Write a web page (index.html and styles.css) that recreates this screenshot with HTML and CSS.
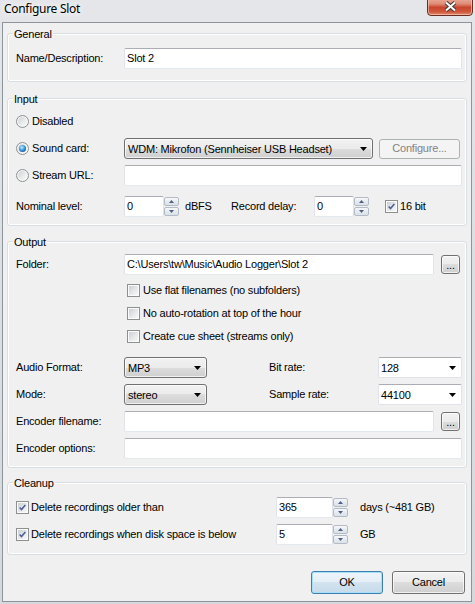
FILE: index.html
```html
<!DOCTYPE html>
<html lang="en">
<head>
<meta charset="utf-8">
<title>Configure Slot</title>
<link rel="stylesheet" href="styles.css">
</head>
<body>
<div class="window">
  <div class="titlebar">
    <span class="title">Configure Slot</span>
    <div class="close-btn">
      <svg width="13" height="11" viewBox="0 0 13 11"><path d="M2 1.5 L11 9.5 M11 1.5 L2 9.5" stroke="#3a3a3a" stroke-width="4"/><path d="M2 1.5 L11 9.5 M11 1.5 L2 9.5" stroke="#fff" stroke-width="2"/></svg>
    </div>
  </div>
  <div class="client">
    <div class="group g-general">
      <span class="legend">General</span>
      <div class="row">
        <span class="lbl">Name/Description:</span>
        <div class="edit grow">Slot 2</div>
      </div>
    </div>

    <div class="group g-input">
      <span class="legend">Input</span>
      <div class="row">
        <span class="opt"><span class="radio"></span>Disabled</span>
      </div>
      <div class="row mt6">
        <span class="lbl opt"><span class="radio on"><span class="dot"></span></span>Sound card:</span>
        <div class="combo face w-sound"><span class="ctext">WDM: Mikrofon (Sennheiser USB Headset)</span><svg class="arrow" width="7" height="4" viewBox="0 0 7 4"><path d="M0 0H7L3.5 4Z"/></svg></div>
        <div class="button disabled w-config">Configure...</div>
      </div>
      <div class="row mt6">
        <span class="lbl opt"><span class="radio"></span>Stream URL:</span>
        <div class="edit grow"></div>
      </div>
      <div class="row mt10">
        <span class="lbl">Nominal level:</span>
        <div class="edit w-num">0</div>
        <div class="spin"><div class="sb"><svg width="5" height="3" viewBox="0 0 5 3"><path d="M0 3H5L2.5 0Z"/></svg></div><div class="sb"><svg width="5" height="3" viewBox="0 0 5 3"><path d="M0 0H5L2.5 3Z"/></svg></div></div>
        <span class="unit w-dbfs">dBFS</span>
        <span class="w-delay">Record delay:</span>
        <div class="edit w-num">0</div>
        <div class="spin"><div class="sb"><svg width="5" height="3" viewBox="0 0 5 3"><path d="M0 3H5L2.5 0Z"/></svg></div><div class="sb"><svg width="5" height="3" viewBox="0 0 5 3"><path d="M0 0H5L2.5 3Z"/></svg></div></div>
        <span class="opt ml-bit"><span class="cb on"><svg width="11" height="11" viewBox="0 0 11 11"><path d="M2 5.5 L4.3 8 L9 2.5" fill="none" stroke="#4a5f97" stroke-width="1.9"/></svg></span>16 bit</span>
      </div>
    </div>

    <div class="group g-output">
      <span class="legend">Output</span>
      <div class="row">
        <span class="lbl">Folder:</span>
        <div class="edit w-path">C:\Users\tw\Music\Audio Logger\Slot 2</div>
        <div class="button face dots">...</div>
      </div>
      <div class="row crow mt7">
        <span class="opt ml-check"><span class="cb"></span>Use flat filenames (no subfolders)</span>
      </div>
      <div class="row crow mt6">
        <span class="opt ml-check"><span class="cb"></span>No auto-rotation at top of the hour</span>
      </div>
      <div class="row crow mt6">
        <span class="opt ml-check"><span class="cb"></span>Create cue sheet (streams only)</span>
      </div>
      <div class="row mt12">
        <span class="lbl">Audio Format:</span>
        <div class="combo face w-small"><span class="ctext">MP3</span><svg class="arrow" width="7" height="4" viewBox="0 0 7 4"><path d="M0 0H7L3.5 4Z"/></svg></div>
        <span class="lbl2">Bit rate:</span>
        <div class="combo white w-rate"><span class="ctext">128</span><svg class="arrow" width="7" height="4" viewBox="0 0 7 4"><path d="M0 0H7L3.5 4Z"/></svg></div>
      </div>
      <div class="row mt6">
        <span class="lbl">Mode:</span>
        <div class="combo face w-small"><span class="ctext">stereo</span><svg class="arrow" width="7" height="4" viewBox="0 0 7 4"><path d="M0 0H7L3.5 4Z"/></svg></div>
        <span class="lbl2">Sample rate:</span>
        <div class="combo white w-rate"><span class="ctext">44100</span><svg class="arrow" width="7" height="4" viewBox="0 0 7 4"><path d="M0 0H7L3.5 4Z"/></svg></div>
      </div>
      <div class="row mt6">
        <span class="lbl">Encoder filename:</span>
        <div class="edit w-path"></div>
        <div class="button face dots">...</div>
      </div>
      <div class="row mt6">
        <span class="lbl">Encoder options:</span>
        <div class="edit grow"></div>
      </div>
    </div>

    <div class="group g-cleanup">
      <span class="legend">Cleanup</span>
      <div class="row">
        <span class="opt w-clean"><span class="cb on"><svg width="11" height="11" viewBox="0 0 11 11"><path d="M2 5.5 L4.3 8 L9 2.5" fill="none" stroke="#4a5f97" stroke-width="1.9"/></svg></span>Delete recordings older than</span>
        <div class="edit w-days">365</div>
        <div class="spin"><div class="sb"><svg width="5" height="3" viewBox="0 0 5 3"><path d="M0 3H5L2.5 0Z"/></svg></div><div class="sb"><svg width="5" height="3" viewBox="0 0 5 3"><path d="M0 0H5L2.5 3Z"/></svg></div></div>
        <span class="unit2">days (~481 GB)</span>
      </div>
      <div class="row mt6">
        <span class="opt w-clean"><span class="cb on"><svg width="11" height="11" viewBox="0 0 11 11"><path d="M2 5.5 L4.3 8 L9 2.5" fill="none" stroke="#4a5f97" stroke-width="1.9"/></svg></span>Delete recordings when disk space is below</span>
        <div class="edit w-days">5</div>
        <div class="spin"><div class="sb"><svg width="5" height="3" viewBox="0 0 5 3"><path d="M0 3H5L2.5 0Z"/></svg></div><div class="sb"><svg width="5" height="3" viewBox="0 0 5 3"><path d="M0 0H5L2.5 3Z"/></svg></div></div>
        <span class="unit2">GB</span>
      </div>
    </div>

    <div class="buttons">
      <div class="button default w-ok">OK</div>
      <div class="button face w-cancel">Cancel</div>
    </div>
  </div>
</div>
</body>
</html>
```

FILE: styles.css
```css
* { box-sizing: border-box; }
html, body { margin: 0; padding: 0; }
body {
  width: 475px;
  height: 604px;
  overflow: hidden;
  font-family: "Liberation Sans", Arial, sans-serif;
  font-size: 11px;
  line-height: 13px;
  letter-spacing: -0.2px;
  color: #000;
  background: #d9dce0;
}
.window {
  width: 475px;
  height: 604px;
  display: flex;
  flex-direction: column;
  padding: 0 3px 2px 2px;
  background: linear-gradient(to bottom, #e4e6e9 0%, #dcdfe3 40%, #d5d8dc 100%);
  position: relative;
}
.titlebar {
  height: 22px;
  flex-shrink: 0;
  display: flex;
  align-items: flex-start;
}
.title {
  font-family: "Noto Sans", "Open Sans", sans-serif;
  font-size: 12px;
  line-height: 16px;
  letter-spacing: -0.3px;
  margin: 1px 0 0 2px;
  color: #000;
  text-shadow: 0 0 6px #fff, 0 0 10px #fff;
}
.close-btn {
  position: absolute;
  left: 427px;
  top: -3px;
  width: 46px;
  height: 19px;
  border: 1px solid #6b2c22;
  border-radius: 0 0 4px 4px;
  background: linear-gradient(to bottom, #eab0a0 0%, #df8b75 35%, #c9452e 55%, #cf573c 80%, #e08a6c 100%);
  box-shadow: inset 0 0 0 1px rgba(255,220,210,0.55);
  display: flex;
  align-items: center;
  justify-content: center;
}
.close-btn svg { display: block; }

.client {
  flex: 1;
  background: #f0f0f0;
  border: 1px solid #8d949c;
  display: flex;
  flex-direction: column;
  padding: 0 4px;
}

.group {
  position: relative;
  border: 1px solid #d5dfe5;
  border-radius: 3px;
  box-shadow: inset 0 0 0 1px #fff;
  padding: 12px 4px 8px 8px;
}
.legend {
  position: absolute;
  left: 5px;
  top: -6px;
  padding: 0 1px;
  background: #f0f0f0;
  line-height: 13px;
}
.g-general { margin-top: 10px; padding-top: 14px; padding-bottom: 12px; }
.g-input { margin-top: 16px; }
.g-output { margin-top: 15px; }
.g-cleanup { margin-top: 14px; padding-top: 14px; padding-bottom: 9px; }

.row {
  display: flex;
  align-items: center;
  height: 21px;
  white-space: nowrap;
}
.crow { height: 17px; }
.mt6 { margin-top: 6px; }
.mt7 { margin-top: 7px; }
.mt10 { margin-top: 10px; }
.mt12 { margin-top: 12px; }

.lbl { width: 108px; flex-shrink: 0; }
.lbl2 { width: 109px; flex-shrink: 0; margin-left: 62px; }
.opt { display: inline-flex; align-items: center; gap: 3px; }
.ml-check { margin-left: 111px; }
.ml-bit { margin-left: 16px; gap: 2px; }
.w-clean { width: 260px; flex-shrink: 0; gap: 2px; }

.edit {
  height: 21px;
  background: #fff;
  border: 1px solid #e2e3ea;
  border-top-color: #abadb3;
  border-bottom-color: #e3e9ef;
  border-radius: 2px;
  padding: 3px 2px 0 2px;
  overflow: hidden;
}
.grow { flex: 1; }
.w-num { width: 40px; flex-shrink: 0; }
.w-path { width: 310px; flex-shrink: 0; }
.w-days { width: 57px; flex-shrink: 0; }

.spin {
  width: 15px;
  height: 19px;
  display: flex;
  flex-direction: column;
  gap: 1px;
  flex-shrink: 0;
}
.sb {
  height: 9px;
  border: 1px solid #b3bcc6;
  border-radius: 2px;
  background: linear-gradient(to bottom, #f6f7f9 0%, #e7ebef 50%, #dbe1e8 100%);
  display: flex;
  align-items: center;
  justify-content: center;
}
.sb svg { display: block; fill: #4d6185; }

.unit.w-dbfs { width: 46px; margin-left: 6px; flex-shrink: 0; }
.w-delay { width: 83px; flex-shrink: 0; }
.unit2 { margin-left: 12px; }

.radio {
  width: 13px;
  height: 13px;
  border-radius: 50%;
  border: 1px solid #8f9194;
  background: linear-gradient(135deg, #c9ccd0 0%, #eceded 60%, #fbfbfb 100%);
  box-shadow: inset 0 0 0 1px #f8f8f8;
  display: inline-flex;
  align-items: center;
  justify-content: center;
  flex-shrink: 0;
}
.radio .dot {
  width: 7px;
  height: 7px;
  border-radius: 50%;
  background: radial-gradient(circle at 40% 35%, #c9ecfd 0%, #55aee6 35%, #1769b0 70%, #0e3f72 100%);
}

.cb {
  width: 13px;
  height: 13px;
  border: 1px solid #8e8f8f;
  padding: 1px;
  background: linear-gradient(135deg, #cbcfd5 0%, #e6e8ea 55%, #f7f7f7 100%) content-box, #fbfbfb;
  display: inline-flex;
  align-items: center;
  justify-content: center;
  flex-shrink: 0;
}
.cb svg { display: block; }

.combo {
  height: 21px;
  display: flex;
  align-items: center;
  justify-content: space-between;
  padding: 1px 5px 0 3px;
  flex-shrink: 0;
}
.combo .arrow { display: block; fill: #000; }
.face {
  border: 1px solid #707070;
  border-radius: 3px;
  background: linear-gradient(to bottom, #f2f2f2 0%, #ebebeb 50%, #dddddd 50%, #cfcfcf 100%);
  box-shadow: inset 0 0 0 1px rgba(255,255,255,0.7);
}
.white {
  background: #fff;
  border: 1px solid #e2e3ea;
  border-top-color: #abadb3;
  border-radius: 2px;
  padding-left: 2px;
}
.w-sound { width: 249px; }
.w-small { width: 83px; }
.w-rate { width: 84px; }

.button {
  display: flex;
  align-items: center;
  justify-content: center;
  flex-shrink: 0;
}
.disabled {
  height: 20px;
  border: 1px solid #adb2b5;
  border-radius: 3px;
  background: #f4f4f4;
  color: #838383;
  margin-left: 6px;
}
.w-config { width: 81px; }
.dots {
  width: 19px;
  height: 19px;
  margin-left: 7px;
  align-items: flex-end;
  padding-bottom: 2px;
  line-height: 11px;
}

.buttons {
  display: flex;
  justify-content: flex-end;
  gap: 9px;
  margin-top: 16px;
  padding-right: 2px;
}
.buttons .button { height: 23px; }
.w-ok { width: 72px; }
.w-cancel { width: 73px; }
.default {
  border: 1px solid #3c7fb1;
  border-radius: 3px;
  background: linear-gradient(to bottom, #eef5fa 0%, #e4eef6 50%, #d3e3ef 50%, #c6dbea 100%);
  box-shadow: inset 0 0 0 1px #a8def7;
}
```
